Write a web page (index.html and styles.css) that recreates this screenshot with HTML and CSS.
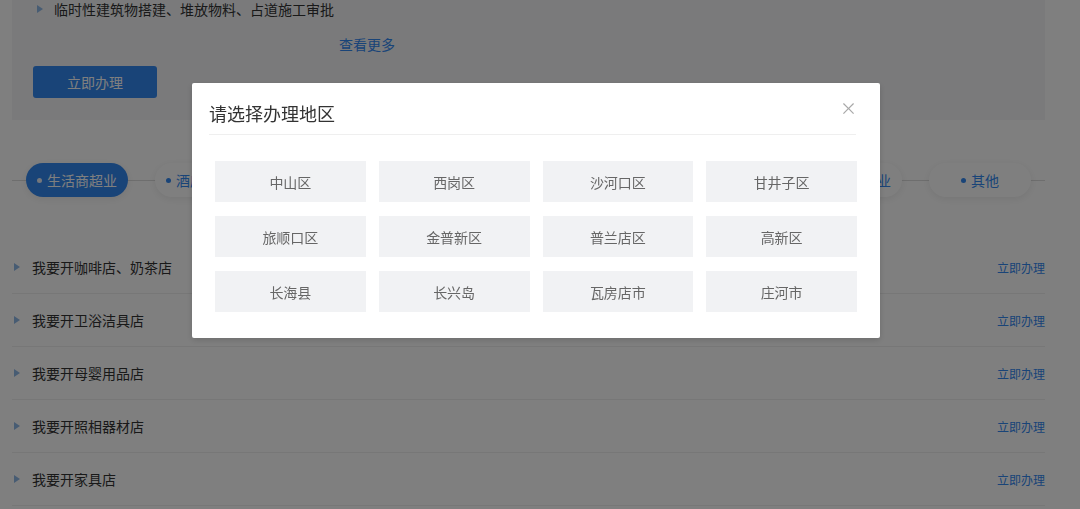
FILE: index.html
```html
<!DOCTYPE html>
<html lang="zh-CN">
<head>
<meta charset="utf-8">
<title>请选择办理地区</title>
<link rel="stylesheet" href="styles.css">
</head>
<body>
<div class="page">
  <section class="card">
    <div class="card-cols">
      <div class="col">
        <div class="item"><span class="tri"></span>临时性建筑物搭建、堆放物料、占道施工审批</div>
      </div>
      <div class="col col-right"></div>
    </div>
    <div class="more-row"><a class="more">查看更多</a></div>
    <button class="btn-primary">立即办理</button>
  </section>

  <nav class="tabs">
    <span class="pill active"><i class="dot"></i>生活商超业</span>
    <span class="pill"><i class="dot"></i>酒店餐饮业</span>
    <span class="pill"><i class="dot"></i>文化娱乐业</span>
    <span class="pill"><i class="dot"></i>教育培训业</span>
    <span class="pill"><i class="dot"></i>医疗健康业</span>
    <span class="pill"><i class="dot"></i>汽车服务业</span>
    <span class="pill"><i class="dot"></i>美容美发业</span>
    <span class="pill"><i class="dot"></i>其他</span>
  </nav>

  <ul class="list">
    <li class="row"><span class="tri"></span><span class="name">我要开咖啡店、奶茶店</span><a class="go">立即办理</a></li>
    <li class="row"><span class="tri"></span><span class="name">我要开卫浴洁具店</span><a class="go">立即办理</a></li>
    <li class="row"><span class="tri"></span><span class="name">我要开母婴用品店</span><a class="go">立即办理</a></li>
    <li class="row"><span class="tri"></span><span class="name">我要开照相器材店</span><a class="go">立即办理</a></li>
    <li class="row"><span class="tri"></span><span class="name">我要开家具店</span><a class="go">立即办理</a></li>
  </ul>
</div>

<div class="mask">
  <div class="modal">
    <div class="modal-head">
      <h2 class="modal-title">请选择办理地区</h2>
      <span class="close">×</span>
    </div>
    <div class="areas">
      <span class="area">中山区</span>
      <span class="area">西岗区</span>
      <span class="area">沙河口区</span>
      <span class="area">甘井子区</span>
      <span class="area">旅顺口区</span>
      <span class="area">金普新区</span>
      <span class="area">普兰店区</span>
      <span class="area">高新区</span>
      <span class="area">长海县</span>
      <span class="area">长兴岛</span>
      <span class="area">瓦房店市</span>
      <span class="area">庄河市</span>
    </div>
  </div>
</div>
</body>
</html>
```

FILE: styles.css
```css
* { box-sizing: border-box; }
html, body { margin: 0; padding: 0; }
body {
  background: #ffffff;
  font-family: "Noto Sans CJK SC", "Noto Sans", sans-serif;
  color: #333;
  font-size: 14px;
  overflow: hidden;
}
.page {
  width: 1033px;
  margin-left: 12px;
}
.card {
  background: #f4f5f7;
  padding: 0 0 22px 21px;
}
.card-cols {
  display: flex;
}
.col {
  width: 423px;
}
.col-right {
  flex: 1;
}
.item {
  display: flex;
  align-items: center;
  height: 18px;
  line-height: 18px;
  font-size: 14px;
  color: #333;
}
.tri {
  width: 0;
  height: 0;
  border-top: 4px solid transparent;
  border-bottom: 4px solid transparent;
  border-left: 6px solid #8fb8e6;
  margin-right: 10px;
  flex: none;
}
.item .tri { margin-left: 4px; margin-right: 11px; }
.more-row {
  width: 668px;
  text-align: center;
  margin-top: 16px;
  height: 20px;
  line-height: 20px;
}
.more {
  color: #3388f0;
  font-size: 14px;
}
.btn-primary {
  display: block;
  margin-top: 12px;
  width: 124px;
  height: 32px;
  border: 0;
  border-radius: 3px;
  background: #3388f0;
  color: #fff;
  font-family: inherit;
  font-size: 14px;
}
.tabs {
  position: relative;
  display: flex;
  gap: 27px;
  padding: 43px 0 0 14px;
  height: 121px;
}
.tabs::before {
  content: "";
  position: absolute;
  left: 0;
  right: 0;
  top: 60px;
  border-top: 1px solid #dcdcdc;
}
.pill {
  position: relative;
  width: 102px;
  height: 34px;
  border-radius: 17px;
  background: #fff;
  box-shadow: 0 2px 8px rgba(0,0,0,0.08);
  color: #3388f0;
  font-size: 14px;
  display: flex;
  align-items: center;
  justify-content: center;
  gap: 5px;
}
.pill.active {
  background: #3388f0;
  color: #fff;
}
.dot {
  width: 5px;
  height: 5px;
  border-radius: 50%;
  background: currentColor;
}
.pill.active .dot { background: #e8eef7; }
.list {
  list-style: none;
  margin: 0;
  padding: 0;
}
.row {
  display: flex;
  align-items: center;
  height: 53px;
  border-bottom: 1px solid #eeeeee;
  padding-left: 2px;
}
.row .tri { margin-right: 12px; }
.name {
  flex: 1;
  font-size: 14px;
  color: #333;
}
.go {
  color: #3388f0;
  font-size: 12px;
}
.mask {
  position: fixed;
  inset: 0;
  background: rgba(0,0,0,0.5);
}
.modal {
  position: absolute;
  left: 192px;
  top: 83px;
  width: 688px;
  height: 255px;
  background: #fff;
  border-radius: 2px;
  box-shadow: 0 2px 6px rgba(0,0,0,0.15);
}
.modal-head {
  position: relative;
  margin: 0 24px 0 17px;
  padding: 18px 0 8px;
  border-bottom: 1px solid #efefef;
}
.modal-title {
  margin: 0;
  font-size: 18px;
  font-weight: normal;
  line-height: 25px;
  color: #333;
}
.close {
  position: absolute;
  right: -1px;
  top: 15px;
  font-size: 17px;
  color: #a8a8a8;
  line-height: 20px;
}
.areas {
  display: grid;
  grid-template-columns: repeat(4, 1fr);
  column-gap: 13px;
  row-gap: 14px;
  padding: 26px 23px 0 23px;
}
.area {
  height: 41px;
  background: #f1f2f4;
  color: #666;
  font-size: 14px;
  display: flex;
  align-items: center;
  justify-content: center;
}
```
